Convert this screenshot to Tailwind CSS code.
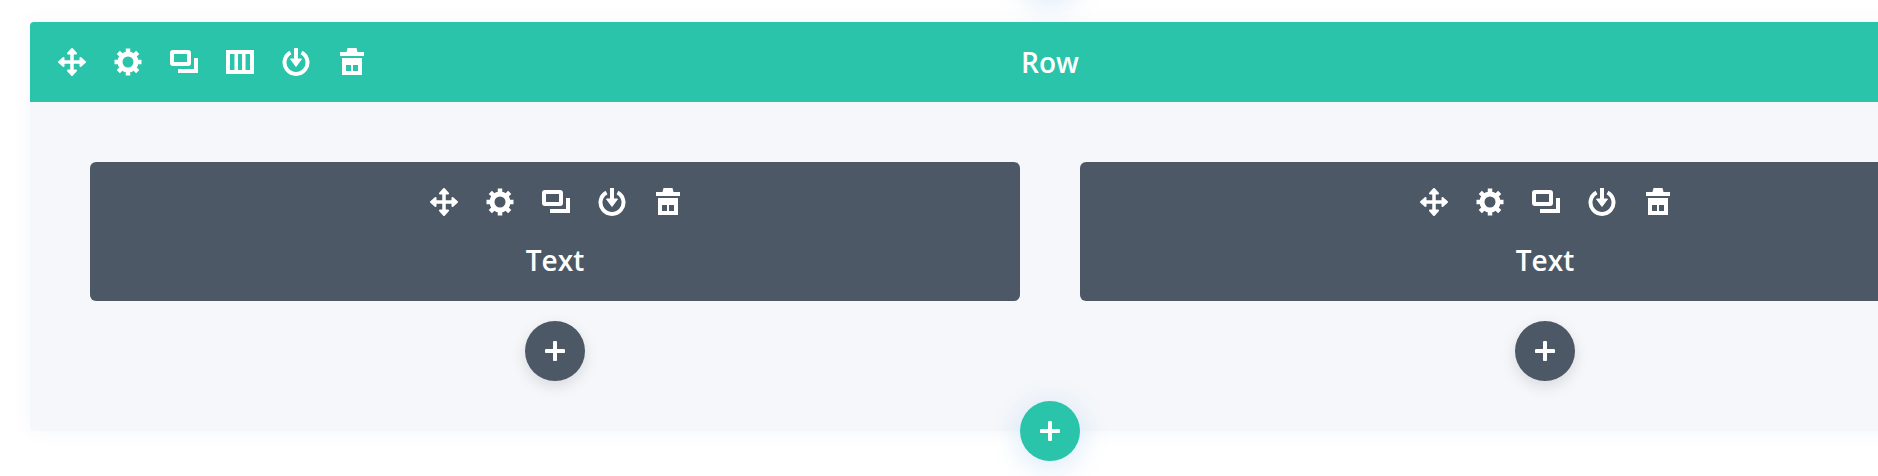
<!DOCTYPE html>
<html lang="en">
	<head>
		<meta charset="UTF-8" />
		<meta name="viewport" content="width=device-width, initial-scale=1.0" />
		<script src="https://cdn.jsdelivr.net/npm/@tailwindcss/browser@4"></script>
		<title>Row</title>
	</head>
	<body class="bg-white overflow-hidden font-['Open_Sans',sans-serif]">
		<svg class="hidden">
			<symbol id="i-move" viewBox="0 0 28 28">
				<path d="M14 3v22M3 14h22" fill="none" stroke="currentColor" stroke-width="3.500" />
				<path d="M14 1l4 4.500h-8zM14 27l4-4.500h-8zM1 14l4.500-4v8zM27 14l-4.500-4v8z" fill="currentColor" stroke="currentColor" stroke-width="2" stroke-linejoin="round" />
			</symbol>
			<symbol id="i-gear" viewBox="0 0 28 28">
				<circle cx="14" cy="14" r="8" fill="none" stroke="currentColor" stroke-width="5" />
				<path d="M14 0.500v5M14 22.500v5M0.500 14h5M22.500 14h5M4.300 4.300l3.600 3.600M20.100 20.100l3.600 3.600M4.300 23.700l3.600-3.600M20.100 7.900l3.600-3.600" fill="none" stroke="currentColor" stroke-width="4.500" />
			</symbol>
			<symbol id="i-copy" viewBox="0 0 28 28">
				<rect x="2" y="4" width="17" height="12" rx="1" fill="none" stroke="currentColor" stroke-width="4" />
				<path d="M26 10v13H8" fill="none" stroke="currentColor" stroke-width="4" />
			</symbol>
			<symbol id="i-cols" viewBox="0 0 28 28">
				<rect x="2" y="4" width="24" height="20" fill="none" stroke="currentColor" stroke-width="4" />
				<path d="M10.200 4v20M17.800 4v20" fill="none" stroke="currentColor" stroke-width="3.500" />
			</symbol>
			<symbol id="i-save" viewBox="0 0 28 28">
				<path d="M8.500 4.400a11.500 11.500 0 1 0 11 0" fill="none" stroke="currentColor" stroke-width="4" />
				<path d="M14 0v13" fill="none" stroke="currentColor" stroke-width="4" />
				<path d="M8.500 11h11l-5.500 7.500z" fill="currentColor" stroke="currentColor" stroke-linejoin="round" />
			</symbol>
			<symbol id="i-trash" viewBox="0 0 28 28">
				<path d="M9.500 0h9l1 4h6.500v4H2V4h6.500z" fill="currentColor" />
				<path fill-rule="evenodd" d="M4 10h20v17H4zM8 17v6h5v-6zM15 17v6h5v-6z" fill="currentColor" />
			</symbol>
		</svg>

		<div class="relative h-[476px] pt-[22px] pl-[30px]">
			<div class="absolute left-[1020px] top-[-62px] size-[60px] rounded-full bg-white shadow-[0_5px_30px_rgba(43,135,218,0.2)]"></div>

			<div class="relative w-[2040px] rounded-[4px] bg-[#f5f7fa] shadow-[0_0_20px_rgba(43,87,150,0.05)]">
				<div class="grid grid-cols-[1fr_auto_1fr] items-center h-20 px-[28px] rounded-t-[4px] bg-[#29c4a9] text-white">
					<div class="flex gap-[28px]">
						<svg class="size-7"><use href="#i-move" /></svg>
						<svg class="size-7"><use href="#i-gear" /></svg>
						<svg class="size-7"><use href="#i-copy" /></svg>
						<svg class="size-7"><use href="#i-cols" /></svg>
						<svg class="size-7"><use href="#i-save" /></svg>
						<svg class="size-7"><use href="#i-trash" /></svg>
					</div>
					<div class="text-[28px] font-semibold">Row</div>
				</div>

				<div class="grid grid-cols-2 gap-[60px] px-[60px] pt-[60px] pb-[50px]">
					<div class="flex flex-col items-center">
						<div class="w-full h-[139px] flex flex-col items-center pt-[26px] rounded-[6px] bg-[#4c5866] text-white">
							<div class="flex gap-[28px] ml-[2px]">
								<svg class="size-7"><use href="#i-move" /></svg>
								<svg class="size-7"><use href="#i-gear" /></svg>
								<svg class="size-7"><use href="#i-copy" /></svg>
								<svg class="size-7"><use href="#i-save" /></svg>
								<svg class="size-7"><use href="#i-trash" /></svg>
							</div>
							<div class="mt-[25px] text-[28px] leading-[38px] font-semibold">Text</div>
						</div>
						<button class="mt-5 size-[60px] flex items-center justify-center rounded-full bg-[#4c5866] text-white shadow-[0_5px_15px_rgba(0,0,0,0.12)]">
							<svg class="size-5" viewBox="0 0 20 20"><path d="M10 1.500v17M1.500 10h17" fill="none" stroke="currentColor" stroke-width="4" stroke-linecap="round" /></svg>
						</button>
					</div>
					<div class="flex flex-col items-center">
						<div class="w-full h-[139px] flex flex-col items-center pt-[26px] rounded-[6px] bg-[#4c5866] text-white">
							<div class="flex gap-[28px] ml-[2px]">
								<svg class="size-7"><use href="#i-move" /></svg>
								<svg class="size-7"><use href="#i-gear" /></svg>
								<svg class="size-7"><use href="#i-copy" /></svg>
								<svg class="size-7"><use href="#i-save" /></svg>
								<svg class="size-7"><use href="#i-trash" /></svg>
							</div>
							<div class="mt-[25px] text-[28px] leading-[38px] font-semibold">Text</div>
						</div>
						<button class="mt-5 size-[60px] flex items-center justify-center rounded-full bg-[#4c5866] text-white shadow-[0_5px_15px_rgba(0,0,0,0.12)]">
							<svg class="size-5" viewBox="0 0 20 20"><path d="M10 1.500v17M1.500 10h17" fill="none" stroke="currentColor" stroke-width="4" stroke-linecap="round" /></svg>
						</button>
					</div>
				</div>

				<button class="absolute left-[990px] bottom-[-30px] size-[60px] flex items-center justify-center rounded-full bg-[#29c4a9] text-white shadow-[0_5px_30px_rgba(43,135,218,0.2)]">
					<svg class="size-5" viewBox="0 0 20 20"><path d="M10 1.500v17M1.500 10h17" fill="none" stroke="currentColor" stroke-width="4" stroke-linecap="round" /></svg>
				</button>
			</div>
		</div>
	</body>
</html>
